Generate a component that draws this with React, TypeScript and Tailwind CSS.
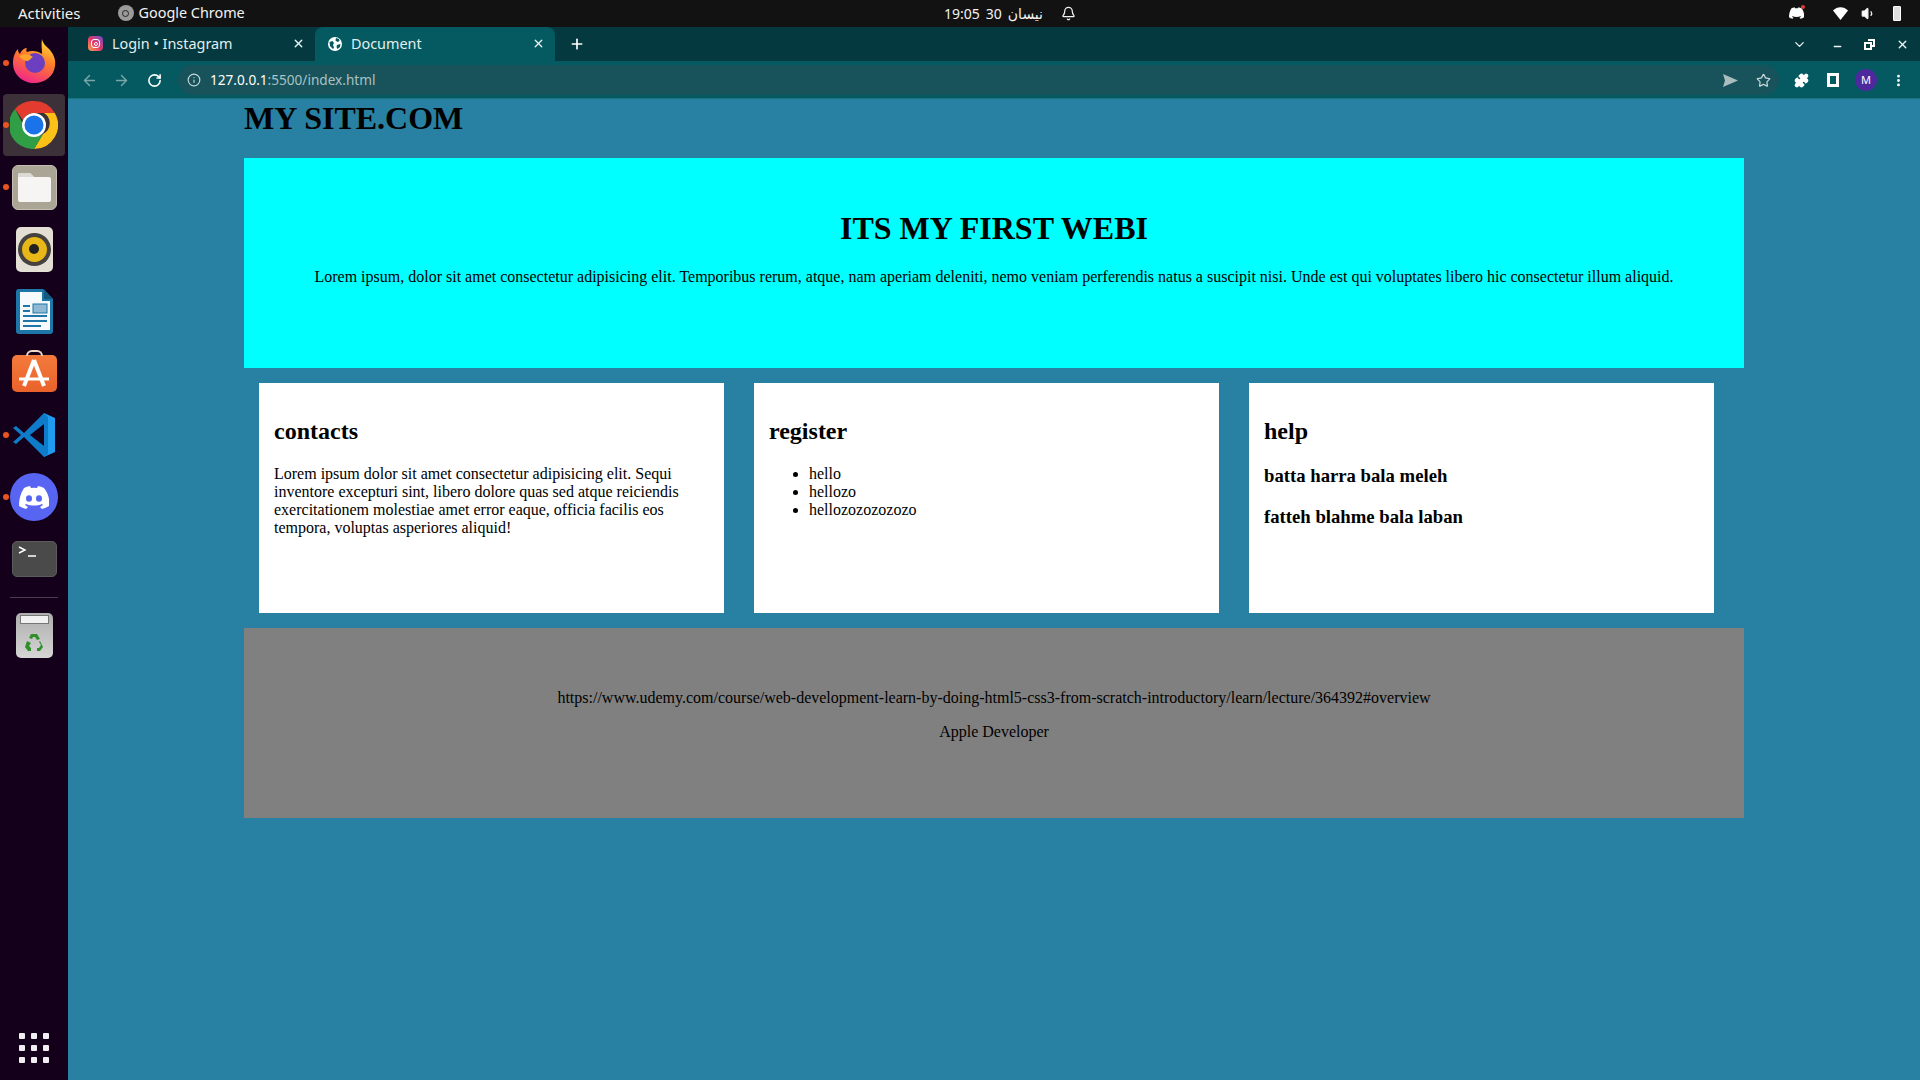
import React from 'react';
import { ArrowLeft, ArrowRight, RotateCw, Info, Star, Puzzle, ChevronDown, X, Plus, Minus, Bell, Volume1, EllipsisVertical } from 'lucide-react';

const serif = "font-['Liberation_Serif',serif]";

const DockDot = () => <span className="absolute left-0 top-1/2 -mt-[3px] w-[6px] h-[6px] rounded-full bg-[#e95420]" />;

const DockItem = ({ children, dot, active }: { children: React.ReactNode; dot?: boolean; active?: boolean }) => (
    <div className={`relative h-[62px] w-[62px] mx-[3px] flex items-center justify-center rounded-[4px] ${active ? 'bg-[#3d3139]' : ''}`}>
        {children}
        {dot && <DockDot />}
    </div>
);

const Firefox = () => (
    <svg width="44" height="46" viewBox="0 0 44 46" className="mb-[4px]">
        <defs>
            <linearGradient id="ff" x1="0.7" y1="0" x2="0.3" y2="1">
                <stop offset="0" stopColor="#ffd93a" />
                <stop offset="0.45" stopColor="#ff7a2b" />
                <stop offset="1" stopColor="#f0248c" />
            </linearGradient>
        </defs>
        <path d="M30 1c1 5 4 7 8 11 4 5 6 10 5 16-1 10-10 17-21 17S1 37 1 25C1 19 3 14 6 11c0 3 1 4 2 5 1-3 4-6 7-6-1 2-1 3 0 4 5-2 11-1 15 2 0-5-1-10 0-15z" fill="url(#ff)" />
        <circle cx="23" cy="25" r="10" fill="#6b3fc0" />
        <path d="M7 18c5-3 11-2 14 1-3 2-3 3-5 4-3 0-7-2-9-5z" fill="#ffa22e" />
    </svg>
);

const Chrome = () => (
    <svg width="48" height="48" viewBox="0 0 48 48">
        <path d="M24 0a24 24 0 0 1 20.8 12H24a12 12 0 0 0-11 7L5 8A24 24 0 0 1 24 0z" fill="#e33b2e" />
        <path d="M44.8 12A24 24 0 0 1 24 48l9-15a12 12 0 0 0 1-21z" fill="#fbc116" />
        <path d="M24 48A24 24 0 0 1 5 8l9 17a12 12 0 0 0 19 8z" fill="#2f9e44" />
        <circle cx="24" cy="24" r="12" fill="#fff" />
        <circle cx="24" cy="24" r="9.5" fill="#1a73e8" />
    </svg>
);

const Files = () => (
    <div className="w-[45px] h-[45px] rounded-[6px] bg-[#aba595] border border-[#c4bfb2] flex items-center justify-center">
        <svg width="33" height="29" viewBox="0 0 33 29">
            <path d="M2 0h10l4 4h15a2 2 0 0 1 2 2v21a2 2 0 0 1-2 2H2a2 2 0 0 1-2-2V2a2 2 0 0 1 2-2z" fill="#f6f5f3" />
            <path d="M0 2a2 2 0 0 1 2-2h10l4 4H0z" fill="#dcdad5" />
        </svg>
    </div>
);

const Rhythmbox = () => (
    <div className="w-[37px] h-[45px] rounded-[5px] bg-[#e3dfd5] flex items-center justify-center">
        <div className="w-[33px] h-[33px] rounded-full bg-[#45423f] flex items-center justify-center">
            <div className="w-[25px] h-[25px] rounded-full bg-[#e8b818] flex items-center justify-center">
                <div className="w-[10px] h-[10px] rounded-full bg-[#222]" />
            </div>
        </div>
    </div>
);

const Writer = () => (
    <svg width="37" height="45" viewBox="0 0 37 45">
        <path d="M3 0h24l10 10v32a3 3 0 0 1-3 3H3a3 3 0 0 1-3-3V3a3 3 0 0 1 3-3z" fill="#1e76a8" />
        <path d="M4 3h22v9h8v29H4z" fill="#f7fafc" />
        <path d="M28 0l9 10h-9z" fill="#135a80" />
        <path d="M7 16h7v2H7zM7 21h7v2H7zM7 26h24v2H7zM7 31h24v2H7zM7 36h18v2H7z" fill="#1e76a8" />
        <rect x="17" y="15" width="14" height="9" fill="#8fb9d3" stroke="#1e76a8" />
    </svg>
);

const AppStore = () => (
    <div className="relative w-[45px] h-[37px] rounded-[5px] bg-gradient-to-b from-[#f47a3c] to-[#e9622a] flex items-center justify-center">
        <div className="absolute -top-[5px] left-[14px] w-[17px] h-[6px] rounded-t-full border-2 border-b-0 border-[#f0d9c4]" />
        <svg width="32" height="30" viewBox="0 0 32 30">
            <path d="M16 2L6 28M16 2l10 26" stroke="#fff" strokeWidth="4" fill="none" />
            <path d="M1 21h30" stroke="#fff" strokeWidth="3" />
        </svg>
    </div>
);

const VSCode = () => (
    <svg width="42" height="44" viewBox="0 0 42 44">
        <path d="M31 0l11 5v34l-11 5z" fill="#1f9cf0" />
        <path d="M31 0L11 20 3 13 0 15l8 7-8 7 3 2 8-7 20 20 4-3V4z" fill="#0f7cc9" />
        <path d="M31 11v22L17 22z" fill="#15001b" />
    </svg>
);

const Discord = () => (
    <div className="w-[48px] h-[48px] rounded-full bg-[#5865f2] flex items-center justify-center">
        <svg width="30" height="23" viewBox="0 0 30 23">
            <path d="M25 2A24 24 0 0 0 19 0l-1 2a22 22 0 0 0-6 0l-1-2a24 24 0 0 0-6 2C1 8 0 14 0 20a24 24 0 0 0 7 3l2-2-3-2 1-1c5 2 11 2 16 0l1 1-3 2 2 2a24 24 0 0 0 7-3c1-7-1-13-5-18z" fill="#fff" />
            <ellipse cx="10" cy="12.5" rx="3" ry="3.3" fill="#5865f2" />
            <ellipse cx="20" cy="12.5" rx="3" ry="3.3" fill="#5865f2" />
        </svg>
    </div>
);

const Terminal = () => (
    <div className="w-[45px] h-[36px] rounded-[5px] bg-[#4a4a4a] border border-[#5c5c5c] relative">
        <svg width="24" height="14" viewBox="0 0 24 14" className="absolute left-[5px] top-[3px]">
            <path d="M1 2l6 3-6 3M10 11h8" stroke="#fff" strokeWidth="1.4" fill="none" />
        </svg>
    </div>
);

const Trash = () => (
    <div className="relative w-[37px] h-[45px] rounded-[5px] bg-gradient-to-b from-[#aeaeae] to-[#d5d5d5] flex items-end justify-center pb-[5px]">
        <div className="absolute top-[2px] left-[4px] right-[4px] h-[9px] bg-[#f1f1f1] border border-[#777]" />
        <svg width="20" height="20" viewBox="0 0 20 20">
            <path d="M7 1h6l3 5-3 1-2-3H9L8 6 5 5zM16 8l3 6-3 4h-3v-3h2l2-3-2-3zM3 8l4 2-2 3 2 2v3H4l-3-4z" fill="#2f8f2a" />
        </svg>
    </div>
);

const Dock = () => (
    <div className="w-[68px] h-full shrink-0 bg-[#15001b] flex flex-col">
        <div className="mt-[5px] flex flex-col">
            <DockItem dot><Firefox /></DockItem>
            <DockItem dot active><Chrome /></DockItem>
            <DockItem dot><Files /></DockItem>
            <DockItem><Rhythmbox /></DockItem>
            <DockItem><Writer /></DockItem>
            <DockItem><AppStore /></DockItem>
            <DockItem dot><VSCode /></DockItem>
            <DockItem dot><Discord /></DockItem>
            <DockItem><Terminal /></DockItem>
        </div>
        <div className="h-px mx-[10px] mt-[7px] bg-[#4a3f4c]" />
        <div className="mt-[6px]"><DockItem><Trash /></DockItem></div>
        <div className="mt-auto mb-[17px] mx-[19px] grid grid-cols-3 gap-[6px]">
            {Array.from({ length: 9 }).map((_, i) => (
                <div key={i} className="w-[6px] h-[6px] rounded-[1px] bg-[#f0eef0]" />
            ))}
        </div>
    </div>
);

const Tab = ({ active, icon, title }: { active?: boolean; icon: React.ReactNode; title: string }) => (
    <div className={`w-[240px] h-[34px] pl-[13px] pr-[10px] pb-[1px] flex items-center rounded-t-[8px] ${active ? 'bg-[#045a60]' : ''}`}>
        {icon}
        <span className="ml-[9px] text-[14.4px] text-[#e3eeee] font-['Noto_Sans',sans-serif]">{title}</span>
        <X size={13} strokeWidth={2.5} className="ml-auto text-[#e8f2f2]" />
    </div>
);

const InstagramIcon = () => (
    <div className="w-[15px] h-[15px] rounded-[4px] bg-gradient-to-tr from-[#f9a13a] via-[#e1306c] to-[#6a3fc8] flex items-center justify-center">
        <div className="w-[9px] h-[9px] rounded-[3px] border border-white flex items-center justify-center">
            <div className="w-[4px] h-[4px] rounded-full border border-white" />
        </div>
    </div>
);

const GlobeIcon = () => (
    <svg width="14" height="14" viewBox="0 0 14 14">
        <circle cx="7" cy="7" r="7" fill="#fff" />
        <path d="M1.5 5l3-1 1.5 2-1 2 1 2.5-1 1.5-3-3zM8 1l3 1 .5 2-2 1-2-1.5zM9 8l3.5-1-.5 3-2.5 2-1-2z" fill="#045a60" />
    </svg>
);

const Browser = () => (
    <div className="h-[72px] shrink-0">
        <div className="h-[34px] bg-[#03393f] flex items-center pl-[7px]">
            <Tab icon={<InstagramIcon />} title="Login • Instagram" />
            <Tab active icon={<GlobeIcon />} title="Document" />
            <Plus size={16} strokeWidth={2.5} className="ml-[14px] text-white" />
            <div className="ml-auto mr-[11px] flex items-center text-[#eef6f6]">
                <ChevronDown size={15} />
                <Minus size={11} strokeWidth={3} className="ml-[25px] mt-[5px]" />
                <svg width="11" height="11" viewBox="0 0 11 11" className="ml-[21px]">
                    <path d="M4 1h6v6H7" stroke="#fff" strokeWidth="2" fill="none" />
                    <rect x="1" y="4" width="6" height="6" stroke="#fff" strokeWidth="2" fill="none" />
                </svg>
                <X size={13} strokeWidth={2.5} className="ml-[21px]" />
            </div>
        </div>
        <div className="h-[38px] bg-[#045a60] flex items-center pt-[1px] pl-[13px] pr-[14px] border-b border-[#1a7478]">
            <ArrowLeft size={17} className="text-[#7aa7aa]" />
            <ArrowRight size={17} className="ml-[15px] text-[#7aa7aa]" />
            <RotateCw size={15} strokeWidth={2.5} className="ml-[17px] text-white" />
            <div className="ml-[16px] flex-1 h-[30px] rounded-full bg-[#18525a] flex items-center pl-[9px] pr-[8px]">
                <Info size={14} className="text-[#c5d6d8]" />
                <span className="ml-[9px] text-[13.6px] text-white font-['Noto_Sans',sans-serif]">127.0.0.1<span className="text-[#a9c2c5]">:5500/index.html</span></span>
                <svg width="15" height="13" viewBox="0 0 15 13" className="ml-auto mr-[18px]"><path d="M0 0l15 6.5L0 13l2-6.5z" fill="#a9bcbe" /></svg>
                <Star size={15} className="text-[#c5d6d8]" />
            </div>
            <Puzzle size={15} fill="#fff" className="ml-[15px] shrink-0 text-white" />
            <div className="ml-[18px] w-[12px] h-[14px] shrink-0 border-[3px] border-white" />
            <div className="ml-[16px] w-[22px] h-[22px] shrink-0 rounded-full bg-[#4c2a9e] text-white text-[11px] flex items-center justify-center font-['Noto_Sans',sans-serif]">M</div>
            <EllipsisVertical size={15} strokeWidth={2.5} className="ml-[14px] shrink-0 text-white" />
        </div>
    </div>
);

const TopBar = () => (
    <div className="h-[27px] pb-[1px] bg-[#121212] shrink-0 flex items-center text-[14.4px] text-[#f2f2f2] font-['Noto_Sans',sans-serif] relative">
        <span className="ml-[18px] text-[15px]">Activities</span>
        <div className="ml-[37px] w-[16px] h-[16px] rounded-full bg-[#9a9a9a] flex items-center justify-center">
            <div className="w-[7px] h-[7px] rounded-full border border-[#222]" />
        </div>
        <span className="ml-[5px]">Google Chrome</span>
        <div className="absolute left-[944px] top-0 h-[26px] flex items-center text-[14px]">
            <span>19:05</span>
            <span className="ml-[6px]">30</span>
            <span className="ml-[6px] font-['Noto_Sans','DejaVu_Sans',sans-serif]">نيسان</span>
            <Bell size={15} className="ml-[18px]" />
        </div>
        <div className="ml-auto mr-[19px] flex items-center">
            <div className="relative mr-[29px]">
                <svg width="15" height="12" viewBox="0 0 30 23"><path d="M25 2A24 24 0 0 0 19 0l-1 2a22 22 0 0 0-6 0l-1-2a24 24 0 0 0-6 2C1 8 0 14 0 20a24 24 0 0 0 7 3l2-2-3-2 1-1c5 2 11 2 16 0l1 1-3 2 2 2a24 24 0 0 0 7-3c1-7-1-13-5-18z" fill="#fff" /></svg>
                <span className="absolute -top-[2px] -right-[1px] w-[4px] h-[4px] rounded-full bg-[#e0393e]" />
            </div>
            <svg width="15" height="13" viewBox="0 0 15 13"><path d="M0 3.5C4 -1 11 -1 15 3.5L7.5 13z" fill="#fff" /></svg>
            <Volume1 size={15} fill="#fff" className="ml-[13px]" />
            <div className="ml-[17px] w-[8px] h-[15px] border border-white bg-[#ddd] rounded-[1px]" />
        </div>
    </div>
);

const Card = ({ children }: { children: React.ReactNode }) => (
    <div className="w-[465px] h-[230px] mx-[15px] p-[15px] bg-white text-black">{children}</div>
);

const Page = () => (
    <div className={`flex-1 bg-[#2880a3] ${serif} text-[16px] leading-[18px]`}>
        <div className="w-[1500px] ml-[176px]">
            <h1 className="h-[59px] pt-[1px] text-[32px] leading-[37px] font-bold text-black">MY SITE.COM</h1>
            <div className="h-[210px] bg-[#00ffff] px-[15px] pt-[52px] text-center text-black">
                <h1 className="text-[32px] leading-[37px] font-bold">ITS MY FIRST WEBI</h1>
                <p className="mt-[21px]">Lorem ipsum, dolor sit amet consectetur adipisicing elit. Temporibus rerum, atque, nam aperiam deleniti, nemo veniam perferendis natus a suscipit nisi. Unde est qui voluptates libero hic consectetur illum aliquid.</p>
            </div>
            <div className="flex py-[15px]">
                <Card>
                    <h2 className="mt-[20px] text-[24px] leading-[27px] font-bold">contacts</h2>
                    <p className="mt-[20px]">Lorem ipsum dolor sit amet consectetur adipisicing elit. Sequi inventore excepturi sint, libero dolore quas sed atque reiciendis exercitationem molestiae amet error eaque, officia facilis eos tempora, voluptas asperiores aliquid!</p>
                </Card>
                <Card>
                    <h2 className="mt-[20px] text-[24px] leading-[27px] font-bold">register</h2>
                    <ul className="mt-[20px] pl-[40px] list-disc">
                        <li>hello</li>
                        <li>hellozo</li>
                        <li>hellozozozozozo</li>
                    </ul>
                </Card>
                <Card>
                    <h2 className="mt-[20px] text-[24px] leading-[27px] font-bold">help</h2>
                    <h3 className="mt-[20px] text-[18.72px] leading-[22px] font-bold">batta harra bala meleh</h3>
                    <h3 className="mt-[19px] text-[18.72px] leading-[22px] font-bold">fatteh blahme bala laban</h3>
                </Card>
            </div>
            <div className="h-[190px] bg-[#808080] pt-[61px] text-center text-black">
                <p>https://www.udemy.com/course/web-development-learn-by-doing-html5-css3-from-scratch-introductory/learn/lecture/364392#overview</p>
                <p className="mt-[16px]">Apple Developer</p>
            </div>
        </div>
    </div>
);

const App: React.FC = () => {
    return (
        <div className="w-[1920px] h-[1080px] flex flex-col overflow-hidden">
            <TopBar />
            <div className="flex flex-1 min-h-0">
                <Dock />
                <div className="flex-1 flex flex-col min-w-0">
                    <Browser />
                    <Page />
                </div>
            </div>
        </div>
    );
};

export default App;
